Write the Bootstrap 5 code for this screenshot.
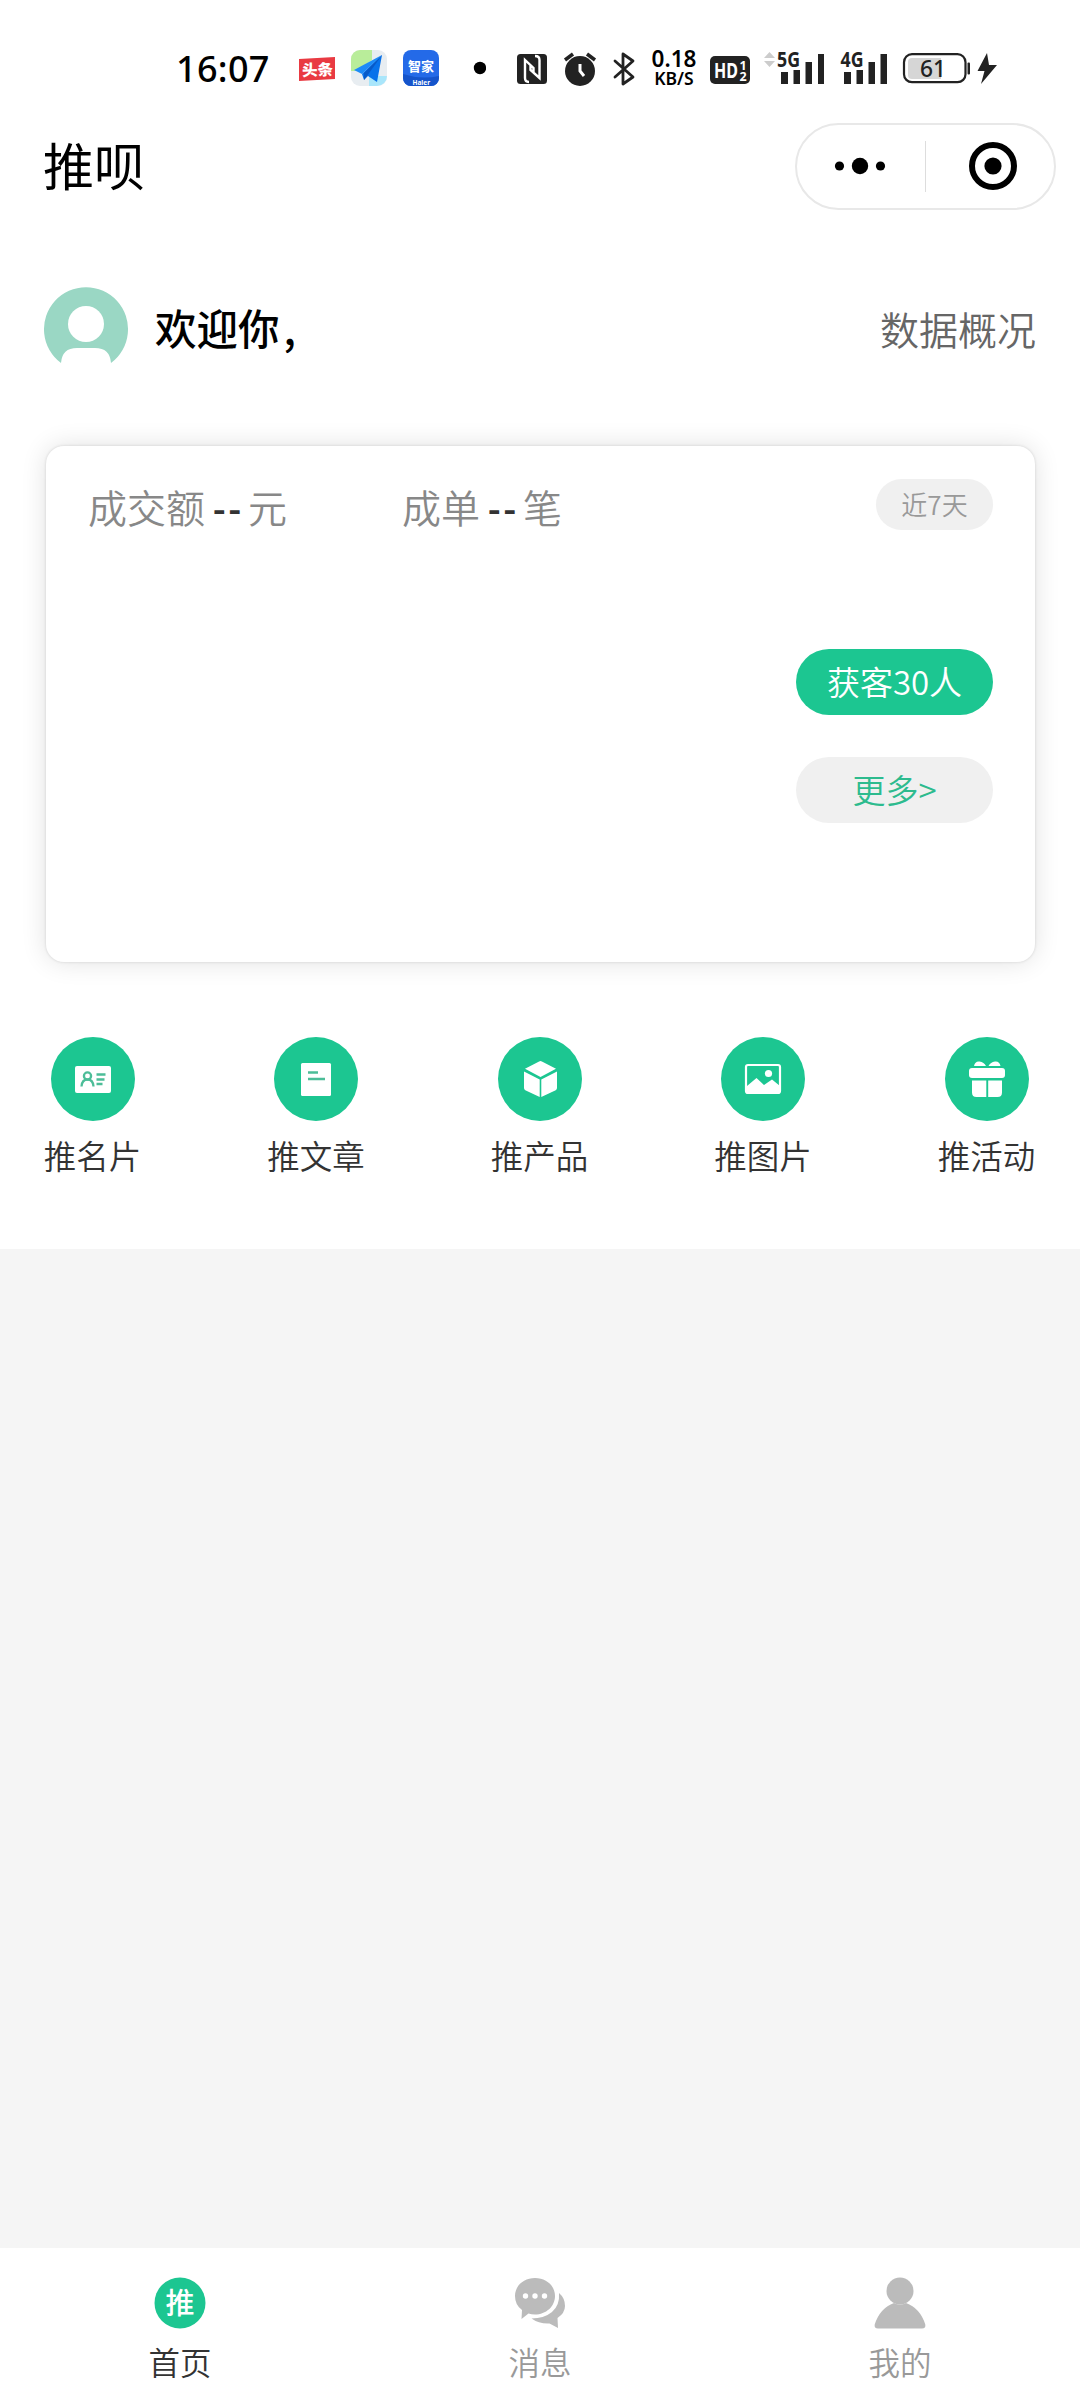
<!DOCTYPE html>
<html lang="zh-CN">
<head>
<meta charset="utf-8">
<meta name="viewport" content="width=device-width, initial-scale=1">
<title>推呗</title>
<link href="https://cdn.jsdelivr.net/npm/bootstrap@5.3.0/dist/css/bootstrap.min.css" rel="stylesheet">
<style>
  body { font-family: "Noto Sans", "Noto Sans CJK SC", sans-serif; color: #333; background: #f5f5f5; line-height: 1; }
  svg { display: block; flex: none; }
  svg text { font-family: "Noto Sans", "Noto Sans CJK SC", sans-serif; }
  .screen { width: 1080px; height: 2400px; overflow: hidden; }
  .cjk { font-family: "Noto Sans CJK SC", sans-serif; font-weight: 350; }
  .status { height: 120px; padding: 16px 0 0 176px; color: #000; }
  .clock { width: 94px; font-size: 36px; letter-spacing: .3px; white-space: nowrap; padding-top: 2px; font-weight: 500; }
  .notices { margin-left: 28px; }
  .system { margin-left: 31px; }
  .speed { width: 46px; margin-left: 15px; font-weight: 600; white-space: nowrap; }
  .speed-num { font-size: 22.500px; line-height: 20px; }
  .speed-unit { font-size: 17.500px; line-height: 18px; }
  .signals { margin-left: 13px; }
  .titlebar { height: 92px; padding: 0 24px 0 43px; }
  .app-title { font-size: 51px; color: #000; padding-bottom: 4px; font-weight: 400; }
  .capsule { width: 261px; height: 87px; border: 2px solid #e8e8e8; border-radius: 44px; }
  .capsule-line { width: 1px; height: 51px; background: #ddd; }
  .welcome { height: 84px; margin-top: 74px; padding: 0 44px; }
  .hello { font-size: 41.500px; font-weight: 500; color: #000; margin-left: 27px; }
  .hello-comma { margin-left: 4px; }
  .overview { font-size: 39px; color: #666; }
  .stats { margin: 76px 45px 0 46px; height: 516px; border: 0; border-radius: 18px; box-shadow: 0 0 3px rgba(0,0,0,.14), 0 0 26px rgba(0,0,0,.12); padding: 33px 42px 0 42px; }
  .figure-row { height: 51px; }
  .figure-line { font-size: 39px; color: #888; line-height: 54px; white-space: nowrap; }
  .figure-line b { font-weight: 500; color: #333; margin: 0 4px 0 8px; letter-spacing: 3px; font-family: "Noto Sans", sans-serif; }
  .turnover { width: 314px; }
  .pill { border-radius: 40px; background: #f0f0f0; display: flex; align-items: center; justify-content: center; white-space: nowrap; padding-bottom: 2px; }
  .pill-range { width: 117px; height: 51px; font-size: 26px; color: #999; }
  .pill-act { width: 197px; height: 66px; font-size: 33px; color: #2dbb8e; }
  .pill-gain { background: #1cc691; color: #fff; }
  .pills { margin-top: 119px; gap: 42px; }
  .shortcuts { margin-top: 75px; padding: 0 44px 0 43px; height: 212px; }
  .shortcut { width: 99px; }
  .shortcut-name { font-size: 32.5px; line-height: 40px; margin-top: 14px; white-space: nowrap; color: #333; }
  .tabs { height: 152px; background: #fff; padding-top: 29px; }
  .tab-name { font-size: 31.5px; line-height: 38px; margin-top: 13px; color: #999; }
  .tab-name.on { color: #333; }
</style>
<script src="https://cdn.jsdelivr.net/npm/bootstrap@5.3.0/dist/js/bootstrap.bundle.min.js"></script>
</head>
<body>
<div class="screen d-flex flex-column">
  <div class="bg-white">
    <div class="status d-flex align-items-center">
      <div class="clock">16:07</div>
      <svg class="notices" width="188" height="44" viewBox="298 46 188 44">
        <path d="M299 59 335 57V79L299 81Z" fill="#e93a42"/>
        <text x="302" y="75.500" font-size="15.500" font-weight="800" fill="#fff" transform="rotate(-2 317 69)">头条</text>
        <rect x="351" y="50" width="36" height="36" rx="9" fill="#e8edf1"/>
        <path d="M351 71V59a9 9 0 0 1 9-9H372V60L357 71Z" fill="#b9ed9a"/>
        <path d="M369 86V76H387a10 10 0 0 1-10 10Z" fill="#a9e6fb"/>
        <path d="M382 55 354 70 362 74Z" fill="#1c8bf8"/>
        <path d="M382 55 362 74 364 80 368 76 377 82Z" fill="#0872ea"/>
        <path d="M382 55 364 73V80L367 76Z" fill="#075ac8"/>
        <rect x="403" y="50" width="36" height="36" rx="8" fill="#246ae8"/>
        <path d="M403 74Q421 80 439 76V78a8 8 0 0 1-8 8H411a8 8 0 0 1-8-8Z" fill="#1554cb"/>
        <text x="408" y="71" font-size="13" font-weight="700" fill="#fff">智家</text>
        <text x="412.500" y="84.500" font-size="6.500" font-weight="700" fill="#fff">Haier</text>
        <circle cx="480" cy="68" r="6.200"/>
      </svg>
      <svg class="system" width="119" height="44" viewBox="517 46 119 44" fill="none" stroke="#222">
        <rect x="517" y="54" width="30" height="30" rx="3.500" fill="#222" stroke="none"/>
        <path d="M529 82Q525 82 525 78V60L533.500 68V73M535 56Q539.500 56 539.500 60V78L530.500 70V65" stroke="#fff" stroke-width="2.400"/>
        <circle cx="580" cy="71" r="15" fill="#222" stroke="none"/>
        <path d="M565 60 573 54M595 60 587 54" stroke-width="3.500"/>
        <path d="M580 64V71L584 76" stroke="#fff" stroke-width="3"/>
        <path d="M615 61 633 77 623 84V54L633 61 615 77" stroke-width="2.800" stroke-linejoin="round" stroke-linecap="round"/>
      </svg>
      <div class="speed d-flex flex-column align-items-center">
        <span class="speed-num">0.18</span>
        <span class="speed-unit">KB/S</span>
      </div>
      <svg class="signals" width="290" height="44" viewBox="710 46 290 44" fill="#222">
        <rect x="710" y="56" width="40" height="28" rx="5"/>
        <text x="714" y="78" font-size="22" font-weight="700" fill="#fff" textLength="24" lengthAdjust="spacingAndGlyphs">HD</text>
        <text x="739.500" y="69.500" font-size="12.500" font-weight="700" fill="#fff">1</text>
        <text x="739.500" y="80.500" font-size="12.500" font-weight="700" fill="#fff">2</text>
        <path d="M764 58 769.500 52 775 58ZM764 61 769.500 67 775 61Z" fill="#ccc"/>
        <text x="777" y="67" font-size="20.500" font-weight="700" textLength="23" lengthAdjust="spacingAndGlyphs">5G</text>
        <path d="M781 72h7v12h-7ZM793.500 70h6.500v14h-6.500ZM805.500 62h6.500v22h-6.500ZM818 54h6v30h-6Z"/>
        <text x="840.500" y="67" font-size="20.500" font-weight="700" textLength="23" lengthAdjust="spacingAndGlyphs">4G</text>
        <path d="M844 72h7v12h-7ZM856.500 70h6.500v14h-6.500ZM868.500 62h6.500v22h-6.500ZM880.500 54h6.500v30h-6.500Z"/>
        <rect x="904" y="54.200" width="61.500" height="28" rx="8" fill="#fff" stroke="#222" stroke-width="2.200"/>
        <path d="M912 58H941V79H912q-4 0-4-4V62q0-4 4-4Z" fill="#d6d6d6"/>
        <rect x="967.500" y="62.500" width="2.500" height="12" rx="1"/>
        <text x="920" y="77" font-size="23" font-weight="500" textLength="26" lengthAdjust="spacingAndGlyphs">61</text>
        <path d="M987 53 977.500 71H984.500L981 84 997 65H989Z"/>
      </svg>
    </div>

    <div class="titlebar d-flex justify-content-between align-items-center cjk">
      <div class="app-title">推呗</div>
      <div class="capsule d-flex align-items-center">
        <svg width="128" height="50" viewBox="0 0 128 50"><circle cx="42.500" cy="25" r="4.600"/><circle cx="63" cy="25" r="8.200"/><circle cx="83.500" cy="25" r="4.600"/></svg>
        <div class="capsule-line"></div>
        <svg width="128" height="50" viewBox="0 0 128 50"><circle cx="67" cy="25" r="21" fill="none" stroke="#000" stroke-width="6"/><circle cx="67" cy="25" r="8.600"/></svg>
      </div>
    </div>

    <div class="welcome d-flex justify-content-between align-items-center cjk">
      <div class="d-flex align-items-center">
        <svg width="84" height="84" viewBox="0 0 84 84">
          <path d="M17 77A42 42 0 1 1 67 77Q66 62 51 62H33Q18 62 17 77Z" fill="#9ad7c4"/>
          <circle cx="42" cy="38" r="18" fill="#fff"/>
        </svg>
        <div class="hello">欢迎你<span class="hello-comma">,</span></div>
      </div>
      <div class="overview">数据概况</div>
    </div>

    <div class="card stats cjk">
      <div class="figure-row d-flex">
        <div class="figure-line turnover">成交额<b>--</b>元</div>
        <div class="figure-line">成单<b>--</b>笔</div>
        <div class="pill pill-range ms-auto">近7天</div>
      </div>
      <div class="pills d-flex flex-column align-items-end">
        <div class="pill pill-act pill-gain">获客30人</div>
        <div class="pill pill-act">更多&gt;</div>
      </div>
    </div>

    <div class="shortcuts d-flex justify-content-between cjk">
      <div class="shortcut d-flex flex-column align-items-center">
        <svg width="84" height="84" viewBox="0 0 84 84"><circle cx="42" cy="42" r="42" fill="#1cc691"/>
          <rect x="24" y="29" width="36" height="27" rx="2" fill="#fff"/>
          <g fill="none" stroke="#4cbd98" stroke-width="2.300"><circle cx="36.500" cy="39" r="3.600"/><path d="M30.500 49.500q.5-7 6-7t6 7M45.500 37.500h9M45.500 42.500h8M45.500 47h6"/></g>
        </svg>
        <div class="shortcut-name">推名片</div>
      </div>
      <div class="shortcut d-flex flex-column align-items-center">
        <svg width="84" height="84" viewBox="0 0 84 84"><circle cx="42" cy="42" r="42" fill="#1cc691"/>
          <rect x="27" y="26" width="30" height="33" rx="1.500" fill="#fff"/>
          <path d="M34 35.500h10M34 42h17" stroke="#4cbd98" stroke-width="2.400"/>
        </svg>
        <div class="shortcut-name">推文章</div>
      </div>
      <div class="shortcut d-flex flex-column align-items-center">
        <svg width="84" height="84" viewBox="0 0 84 84"><circle cx="42" cy="42" r="42" fill="#1cc691"/>
          <path d="M42.500 24q.7 0 1.400.4L58 31.800 42.500 40 27 31.800 41.100 24.400q.7-.4 1.400-.4ZM26 34.500 41.700 42.500V60L27.300 53.200Q26 52.500 26 51ZM59 34.500 43.300 42.500V60L57.700 53.200Q59 52.500 59 51Z" fill="#fff"/>
        </svg>
        <div class="shortcut-name">推产品</div>
      </div>
      <div class="shortcut d-flex flex-column align-items-center">
        <svg width="84" height="84" viewBox="0 0 84 84"><circle cx="42" cy="42" r="42" fill="#1cc691"/>
          <rect x="25" y="28" width="34" height="28" rx="2" fill="none" stroke="#fff" stroke-width="2.200"/>
          <path d="M26 49 35.500 41 43 48 51 42.500 59 49V56H26Z" fill="#fff"/><circle cx="47.500" cy="36.500" r="3.600" fill="#fff"/>
        </svg>
        <div class="shortcut-name">推图片</div>
      </div>
      <div class="shortcut d-flex flex-column align-items-center">
        <svg width="84" height="84" viewBox="0 0 84 84"><circle cx="42" cy="42" r="42" fill="#1cc691"/>
          <g fill="#fff"><path d="M29 29Q30 24 34.500 24.500 39 25 41 29ZM55.500 29Q54.500 24 50 24.500 45.500 25 43.500 29Z"/>
          <rect x="24" y="31" width="36" height="10" rx="3"/>
          <path d="M27 43.500H41.300V60H31.500Q27 60 27 55.500ZM43.200 43.500H57V55.500Q57 60 52.500 60H43.200Z"/></g>
        </svg>
        <div class="shortcut-name">推活动</div>
      </div>
    </div>
  </div>

  <div class="flex-grow-1"></div>

  <div class="tabs row g-0 cjk">
    <div class="col d-flex flex-column align-items-center">
      <svg width="52" height="52" viewBox="0 0 52 52"><circle cx="26" cy="26" r="25.500" fill="#1cc691"/>
        <text x="26" y="37" text-anchor="middle" font-size="29" font-weight="500" fill="#fff">推</text></svg>
      <div class="tab-name on">首页</div>
    </div>
    <div class="col d-flex flex-column align-items-center">
      <svg width="52" height="52" viewBox="0 0 52 52" fill="#bbb">
        <path d="M45 16Q51 21 51 29 51 36 43.500 41L44 51 35.500 46.500Q25 47 17.500 41.500 30 41.500 38 35 46 28 45 16Z"/>
        <path d="M21 1C32 1 41 8.500 41 19S32 37.500 21 37.500Q17.500 37.500 14.500 36.500L7.500 42 8 33Q1 28 1 19C1 8.500 10 1 21 1Z"/>
        <g fill="#fff"><circle cx="11.500" cy="19" r="2.700"/><circle cx="21" cy="19" r="2.700"/><circle cx="30.500" cy="19" r="2.700"/></g>
      </svg>
      <div class="tab-name">消息</div>
    </div>
    <div class="col d-flex flex-column align-items-center">
      <svg width="52" height="52" viewBox="0 0 52 52" fill="#bbb">
        <circle cx="26" cy="14" r="13.500"/>
        <path d="M20 26Q26 29 32 26 46 31 51.300 47.500 52 51.500 48 51.500H4Q0 51.500 .7 47.500 6 31 20 26Z"/>
      </svg>
      <div class="tab-name">我的</div>
    </div>
  </div>
</div>
</body>
</html>
